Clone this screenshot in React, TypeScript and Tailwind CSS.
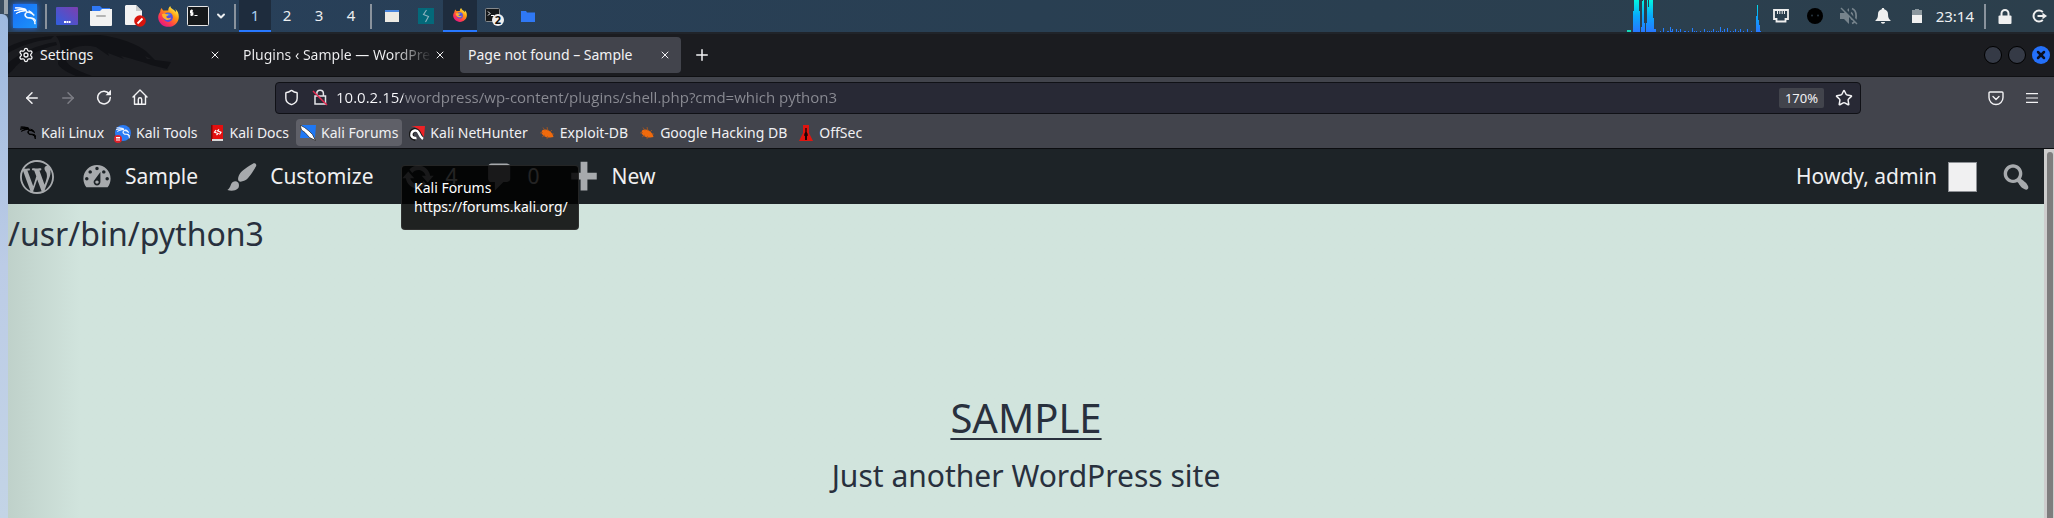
import React from "react";
import { SiKalilinux } from "react-icons/si";
import { ArrowLeft, ArrowRight, ChevronDown, Plus, X, Shield, Star, Menu, Settings } from "lucide-react";

function Dashicon({ d, className }: { d: string; className: string }) {
  return (
    <svg viewBox="0 0 20 20" className={className} fill="currentColor" aria-hidden="true">
      <path d={d} />
    </svg>
  );
}

const DASH = {
  wordpress:
    "M20 10c0-5.51-4.49-10-10-10S0 4.49 0 10s4.48 10 10 10 10-4.49 10-10zM7.78 15.37L4.37 6.22c.55-.02 1.17-.08 1.17-.08.5-.06.44-1.13-.06-1.11 0 0-1.45.11-2.37.11-.18 0-.37 0-.58-.01C4.12 2.69 6.87 1.11 10 1.11c2.33 0 4.45.87 6.05 2.34-.68-.11-1.65.39-1.65 1.58 0 .74.45 1.36.9 2.1.35.61.55 1.36.55 2.46 0 1.49-1.4 5-1.4 5l-3.03-8.37c.54-.02.82-.17.82-.17.5-.05.44-1.25-.06-1.22 0 0-1.44.12-2.38.12-.87 0-2.33-.12-2.33-.12-.5-.03-.56 1.2-.06 1.22l.92.08 1.26 3.41zM17.41 10c.24-.64.74-1.87.43-4.25.7 1.29 1.05 2.71 1.05 4.25 0 3.29-1.73 6.24-4.4 7.78.97-2.59 1.94-5.2 2.92-7.78zM6.1 18.09C3.12 16.65 1.11 13.53 1.11 10c0-1.3.23-2.48.72-3.59C3.25 10.3 4.67 14.2 6.1 18.09zm4.03-6.63l2.58 6.98c-.86.29-1.76.45-2.71.45-.79 0-1.57-.11-2.29-.33.81-2.38 1.62-4.74 2.42-7.1z",
  dashboard:
    "M3.76 16h12.48c1.1-1.37 1.76-3.11 1.76-5 0-4.42-3.58-8-8-8s-8 3.58-8 8c0 1.89.66 3.63 1.76 5zM10 4c.55 0 1 .45 1 1s-.45 1-1 1-1-.45-1-1 .45-1 1-1zM6 6c.55 0 1 .45 1 1s-.45 1-1 1-1-.45-1-1 .45-1 1-1zm8 0c.55 0 1 .45 1 1s-.45 1-1 1-1-.45-1-1 .45-1 1-1zm-5.37 5.55L12 7v6c0 1.1-.9 2-2 2s-2-.9-2-2c0-.57.24-1.08.63-1.45zM4 10c.55 0 1 .45 1 1s-.45 1-1 1-1-.45-1-1 .45-1 1-1zm12 0c.55 0 1 .45 1 1s-.45 1-1 1-1-.45-1-1 .45-1 1-1zm-5 3c0-.55-.45-1-1-1s-1 .45-1 1 .45 1 1 1 1-.45 1-1z",
  brush:
    "M18.33 3.57s.27-.8-.31-1.36c-.53-.52-1.22-.24-1.22-.24-.61.3-5.76 3.47-7.67 5.57-.86.96-2.06 3.79-1.09 4.82.92.98 3.96-.17 4.79-1 2.06-2.06 5.21-7.17 5.5-7.79zM1.4 17.65c2.37-1.56 1.46-3.41 3.23-4.64.93-.65 2.22-.62 3.08.29.63.67.8 2.57-.16 3.46-1.57 1.45-4 1.55-6.15.89z",
  update:
    "M10.2 3.28c3.53 0 6.43 2.61 6.92 6h2.08l-3.5 4-3.5-4h2.32c-.45-1.97-2.21-3.45-4.32-3.45-1.45 0-2.73.71-3.54 1.78L4.95 5.66C6.23 4.2 8.11 3.28 10.2 3.28zm-.4 13.44c-3.52 0-6.43-2.61-6.92-6H.8l3.5-4c1.17 1.33 2.33 2.67 3.5 4H5.48c.45 1.97 2.21 3.45 4.32 3.45 1.45 0 2.73-.71 3.54-1.78l1.71 1.95c-1.28 1.46-3.15 2.38-5.25 2.38z",
  comment: "M5 2h9c1.1 0 2 .9 2 2v7c0 1.1-.9 2-2 2h-2l-5 5v-5H5c-1.1 0-2-.9-2-2V4c0-1.1.9-2 2-2z",
  plus: "M8 1h4v6.500h5.500v4h-5.500v6.500h-4v-6.500h-5.500v-4h5.500z",
  search:
    "M12.14 4.18c1.87 1.87 2.11 4.75.72 6.89.12.1.22.21.36.31.2.16.47.36.81.59.34.24.56.39.66.47.42.31.73.57.94.78.32.32.6.65.84 1 .25.35.44.69.59 1.04.14.35.21.68.18 1-.02.32-.14.59-.36.81s-.49.34-.81.36c-.31.02-.65-.04-.99-.19-.35-.14-.7-.34-1.04-.59-.35-.24-.68-.52-1-.84-.21-.21-.47-.52-.77-.93-.1-.13-.25-.35-.47-.66-.22-.32-.4-.57-.56-.78-.16-.2-.29-.35-.44-.5-2.07 1.09-4.69.76-6.44-.98-2.14-2.15-2.14-5.64 0-7.78 2.15-2.15 5.63-2.15 7.78 0zm-1.41 6.36c1.36-1.37 1.36-3.58 0-4.95-1.37-1.37-3.59-1.37-4.95 0-1.37 1.37-1.37 3.58 0 4.95 1.36 1.37 3.58 1.37 4.95 0z",
};

function FirefoxLogo({ className, id }: { className: string; id: string }) {
  return (
    <svg viewBox="0 0 24 24" className={className} aria-hidden="true">
      <defs>
        <linearGradient id={id + "-body"} x1="0.85" y1="0.1" x2="0.2" y2="0.95">
          <stop offset="0" stopColor="#fff44f" />
          <stop offset="0.35" stopColor="#ff980e" />
          <stop offset="0.7" stopColor="#ff3f4a" />
          <stop offset="1" stopColor="#e31587" />
        </linearGradient>
      </defs>
      <path fill={`url(#${id}-body)`} d="M14 0c-2 2-2.400 3.600-2.200 5C8.500 5 7.500 5.600 6 5 4.900 4.400 4.600 3.400 4.500 2.400 3 3.600 2.500 5.200 2.500 6.800 1 8.700.2 10.800.2 13 .5 19.200 5.500 23.800 12 23.800c6.600 0 11.800-4.800 11.800-11.600 0-4-1.800-6.800-4-8.700.7 1.400.9 2.500.8 3.600C18.800 4 14.500 3.500 14 0z" />
      <circle cx="11.600" cy="12.800" r="5.400" fill="#5a4fe0" />
      <path fill="#3a8ef0" d="M7 10.500c2-2.600 6.500-2.600 8.500 0-2.400-.5-3 .8-4.400 1.200-1.400.3-3 0-4.100-1.200z" />
      <path fill="#ffb02e" d="M4.500 9.500c2-1.500 4-1 5.200-.2 1 .1 2 .1 2.500.5-.5 1.300-2.400 1.400-2.700 2.500 0 1 1 1.700 2.400 1.600 1.200-.1 2-.9 3.100-.4-.8 1.900-3 3-5.200 2.400C6.500 15.100 4.600 12.500 4.500 9.500z" />
    </svg>
  );
}

function DisplayIcon() {
  return (
    <svg viewBox="0 0 22 18" className="h-[18px] w-[22px]" aria-hidden="true">
      <defs>
        <linearGradient id="desk" x1="0" y1="1" x2="1" y2="0">
          <stop offset="0" stopColor="#2f5fe0" />
          <stop offset="1" stopColor="#7d3fae" />
        </linearGradient>
      </defs>
      <rect width="22" height="18" rx="1" fill="url(#desk)" />
      <path fill="#fff" d="M8 14h2v2H8zM10.500 14h2v2h-2zM13 14h1.500v2H13z" />
    </svg>
  );
}

function FilesIcon() {
  return (
    <svg viewBox="0 0 22 20" className="h-5 w-[22px]" aria-hidden="true">
      <path fill="#2f78f4" d="M2 0h8l2 2h8v6H2z" />
      <path fill="#f2f2f2" d="M0 5h10l2-2h10v16a1 1 0 0 1-1 1H1a1 1 0 0 1-1-1z" />
      <rect x="6" y="9" width="10" height="2" rx="1" fill="#b4b4b4" />
    </svg>
  );
}

function EditorIcon() {
  return (
    <svg viewBox="0 0 22 22" className="h-[22px] w-[22px]" aria-hidden="true">
      <path fill="#f3f3f3" d="M2 0h10l6 6v14H2a1 1 0 0 1-1-1V1z" />
      <path fill="#c9c9c9" d="M12 0l6 6h-6z" />
      <circle cx="16" cy="16" r="5.800" fill="#d8140c" />
      <path stroke="#fff" strokeWidth="1.800" d="M13.500 18.500l5-5" />
    </svg>
  );
}

function TerminalIcon() {
  return (
    <svg viewBox="0 0 22 20" className="h-5 w-[22px]" aria-hidden="true">
      <rect x=".5" y=".5" width="21" height="19" rx="1" fill="#15181a" stroke="#e6e6e6" />
      <path fill="none" stroke="#fff" strokeWidth="1.200" d="M6 4.800H3.600v2H5.800v2H3.200M4.700 3.500v6.500M7.500 9.500h3" />
    </svg>
  );
}

const BARS = [
  [6, 21], [7, 32], [8, 32], [9, 32], [10, 32], [11, 32], [12, 21], [14, 5], [15, 31], [16, 32], [17, 9], [19, 9],
  [20, 32], [21, 25], [22, 32], [23, 32], [24, 32], [25, 32], [26, 14], [27, 3], [28, 3], [33, 1], [36, 4], [40, 1], [41, 1],
  [43, 5], [44, 1], [45, 3], [49, 3], [51, 1], [53, 3], [57, 1], [58, 1], [61, 1], [65, 4], [67, 1], [69, 1], [73, 1], [77, 3],
  [80, 1], [82, 1], [84, 1], [86, 3], [89, 1], [91, 1], [93, 5], [95, 1], [97, 3], [100, 4], [103, 1], [106, 1], [108, 3],
  [111, 1], [113, 3], [116, 1], [120, 3], [124, 1], [129, 16], [130, 27], [131, 12], [132, 7], [133, 1],
];

function CpuGraph() {
  return (
    <svg viewBox="0 0 134 32" className="h-8 w-[134px]" aria-label="CPU graph" role="img" shapeRendering="crispEdges">
      <defs>
        <linearGradient id="cpu" gradientUnits="userSpaceOnUse" x1="0" y1="0" x2="0" y2="32">
          <stop offset="0" stopColor="#00f5e0" />
          <stop offset="0.5" stopColor="#0aa8fb" />
          <stop offset="1" stopColor="#2777ff" />
        </linearGradient>
      </defs>
      <rect x="0" y="30" width="4" height="2" fill="#16d9b8" />
      {BARS.map(([x, h]) => (
        <rect key={x} x={x} y={32 - h} width="1" height={h} fill="url(#cpu)" />
      ))}
    </svg>
  );
}

function Separator() {
  return <span className="h-[25px] w-0.5 bg-[#8a939d]" />;
}

function TaskButton({ label, active, children }: { label: string; active?: boolean; children: React.ReactNode }) {
  return (
    <button
      aria-label={label}
      className={
        active
          ? "flex h-8 w-[34px] items-center justify-center border-b-2 border-[#2777ff] bg-[#1e2c3d]"
          : "flex h-8 w-[34px] items-center justify-center"
      }
    >
      {children}
    </button>
  );
}

function SystemPanel() {
  return (
    <header className="flex h-8 items-center bg-linear-to-r from-[#28405b] via-[#293f52] to-[#2c3f4c] text-[#eceff1]">
      <button
        aria-label="Applications"
        className="ml-[5px] flex h-6 w-6 items-center justify-center bg-linear-to-br from-[#1b6cf5] to-[#1d93fb] shadow-[0_0_5px_#2777ff]"
      >
        <SiKalilinux className="h-[22px] w-[22px] text-white" stroke="currentColor" strokeWidth={1} />
      </button>
      <div className="ml-2 flex items-center">
        <Separator />
        <div className="ml-[9px] mr-[7px] flex items-center gap-3">
          <button aria-label="Show desktop"><DisplayIcon /></button>
          <button aria-label="Files"><FilesIcon /></button>
          <button aria-label="Text editor"><EditorIcon /></button>
          <button aria-label="Firefox"><FirefoxLogo id="launch" className="h-[21px] w-[21px]" /></button>
          <div className="-ml-1 flex items-center gap-1.5">
            <button aria-label="Terminal"><TerminalIcon /></button>
            <button aria-label="More terminals"><ChevronDown className="h-3 w-3" strokeWidth={4} /></button>
          </div>
        </div>
        <Separator />
      </div>
      <nav aria-label="Workspaces" className="ml-[3px] mr-[3px] flex text-[15px] leading-[30px]">
        <button className="h-8 w-8 border-b-2 border-[#2777ff] bg-[#1e2c3d] text-[#a9d1ee]">1</button>
        <button className="h-8 w-8 border-b-2 border-transparent">2</button>
        <button className="h-8 w-8 border-b-2 border-transparent">3</button>
        <button className="h-8 w-8 border-b-2 border-transparent">4</button>
      </nav>
      <Separator />
      <div className="ml-[3px] flex">
        <TaskButton label="Window">
          <svg viewBox="0 0 14 12" className="h-3 w-3.5"><rect width="14" height="12" fill="#edebe4" /><rect width="14" height="2" fill="#4a86dd" /></svg>
        </TaskButton>
        <TaskButton label="Burp">
          <svg viewBox="0 0 16 16" className="h-4 w-4"><rect width="16" height="16" fill="#04697a" /><path fill="none" stroke="#8fb3bf" strokeWidth="1.100" d="M8.500 2L5.500 6.500 10.500 8.500 7.500 14" /></svg>
        </TaskButton>
        <TaskButton label="Firefox window" active>
          <FirefoxLogo id="task" className="h-3.5 w-3.5" />
        </TaskButton>
        <TaskButton label="Terminal windows">
          <svg viewBox="0 0 20 20" className="h-5 w-5">
            <rect x="1.500" y="2.500" width="14" height="13" rx="1" fill="#15181a" stroke="#85898c" />
            <path fill="none" stroke="#fff" d="M4 5.500l2 2-2 2M7 9.500h3" />
            <circle cx="14" cy="14" r="6" fill="#efefef" />
            <text x="14" y="18" textAnchor="middle" fontSize="11" fontWeight="700" fill="#111">2</text>
          </svg>
        </TaskButton>
        <TaskButton label="Folder">
          <svg viewBox="0 0 14 11" className="h-[11px] w-3.5"><path fill="#2f78f4" d="M0 0h5l1 1.500h8V11H0z" /></svg>
        </TaskButton>
      </div>

      <div className="ml-auto flex items-center">
        <CpuGraph />
        <div className="ml-[3px] flex">
          <TaskButton label="Network">
            <svg viewBox="0 0 16 14" className="h-3.5 w-4"><path fill="none" stroke="#eee" strokeWidth="1.800" d="M1 1h14v9h-2.500v2.500h-9V10H1z" /><path stroke="#eee" d="M4.500 2v3M6.800 2v3M9.200 2v3M11.500 2v3" /></svg>
          </TaskButton>
          <TaskButton label="Status">
            <svg viewBox="0 0 16 16" className="h-4 w-4"><circle cx="8" cy="8" r="8" fill="#000" /><circle cx="5" cy="7.500" r="1" fill="#26343f" /><circle cx="11" cy="7.500" r="1" fill="#26343f" /></svg>
          </TaskButton>
          <TaskButton label="Muted">
            <svg viewBox="0 0 18 18" className="h-[18px] w-[18px]"><path fill="#76838c" d="M0 6h4l5-5v16l-5-5H0z" /><path fill="none" stroke="#76838c" strokeWidth="1.800" d="M11 5.500c2 1.500 2 5.500 0 7M12 1.500c5.500 2 5.500 13 0 15" /><path stroke="#2b3f4d" strokeWidth="3" d="M2 0l16 16" /><path stroke="#76838c" strokeWidth="1.500" d="M1 1l16 16" /></svg>
          </TaskButton>
          <TaskButton label="Notifications">
            <svg viewBox="0 0 16 16" className="h-4 w-4"><path fill="#f0f0f0" d="M8 0c1 0 1.200.6 1.200 1.200C11.600 1.800 13 3.600 13 6c0 3.500.8 5 2.500 6.200V13H.5v-.8C2.200 11 3 9.500 3 6c0-2.400 1.400-4.200 3.800-4.800C6.800.6 7 0 8 0zM6 14h4c0 1-.8 1.700-2 1.700S6 15 6 14z" /></svg>
          </TaskButton>
          <TaskButton label="Battery">
            <svg viewBox="0 0 10 14" className="h-3.5 w-2.5"><path fill="#8b979e" d="M3 0h4v1h3v5H0V1h3z" /><path fill="#f0f0f0" d="M0 6h10v8H0z" /></svg>
          </TaskButton>
        </div>
        <time className="ml-0.5 mr-2.5 text-[15px] leading-8">23:14</time>
        <Separator />
        <div className="ml-1 flex gap-5 pr-[7px] pl-2">
          <button aria-label="Lock screen" className="flex h-8 items-center">
            <svg viewBox="0 0 14 15" className="h-[15px] w-3.5"><path fill="none" stroke="#f0f0f0" strokeWidth="2" d="M3.500 7V4.500a3.500 3.500 0 0 1 7 0V7" /><rect x=".5" y="6.500" width="13" height="8.500" rx="1" fill="#f0f0f0" /></svg>
          </button>
          <button aria-label="Log out" className="flex h-8 items-center">
            <svg viewBox="0 0 15 14" className="h-3.5 w-[15px]"><path fill="none" stroke="#f0f0f0" strokeWidth="2" d="M10.800 3A5.500 5.500 0 1 0 10.800 11M5.500 7H11" /><path fill="#f0f0f0" d="M10.500 3.800L15 7l-4.500 3.200z" /></svg>
          </button>
        </div>
      </div>
    </header>
  );
}

function TabBar() {
  return (
    <div className="relative flex h-[45px] items-center gap-1 border-b border-t-2 border-b-[#0f1013] border-t-[#20242a] bg-[#1b1c20] pl-0.5 text-sm text-[#f2f2f4]">
      <svg viewBox="0 0 164 42" className="absolute left-0 top-0 h-[42px] w-[164px]" aria-hidden="true">
        <path fill="#111216" d="M0 13C14 6 28 3 46 2L43 5C26 7 12 12 0 19zM0 29C12 19 28 11 48 8L49 11C30 15 14 24 4 37L0 40zM48 2L92 1C110 3 130 10 139 18L147 26 163 28 159 35 143 31C132 27 124 25 113 22L116 25 100 19 101 22 88 13C76 10 64 12 58 20C54 30 68 36 84 42H68C58 38 52 34 50 30C51 20 56 12 48 2z" />
        <path fill="#1b1c20" d="M137 22l6 3-4 0z" />
      </svg>
      <div className="relative flex h-9 w-[221px] items-center rounded pl-2 pr-2">
        <Settings className="h-4 w-4" strokeWidth={2} />
        <span className="ml-1.5 flex-1">Settings</span>
        <button aria-label="Close Settings"><X className="h-4 w-4 p-0.5" strokeWidth={2} /></button>
      </div>
      <div className="flex h-9 w-[221px] items-center rounded pl-2 pr-2">
        <span className="w-0 flex-1 overflow-hidden whitespace-nowrap bg-linear-to-r from-[#f2f2f4] from-80% to-transparent bg-clip-text text-transparent">
          Plugins ‹ Sample — WordPress
        </span>
        <button aria-label="Close Plugins"><X className="h-4 w-4 p-0.5" strokeWidth={2} /></button>
      </div>
      <div className="flex h-9 w-[221px] items-center rounded bg-[#42444c] pl-2 pr-2">
        <span className="flex-1">Page not found – Sample</span>
        <button aria-label="Close page"><X className="h-4 w-4 p-0.5" strokeWidth={2} /></button>
      </div>
      <button aria-label="New tab" className="ml-2"><Plus className="h-[18px] w-[18px]" strokeWidth={2} /></button>
      <div className="ml-auto mr-1 flex gap-1.5">
        <button aria-label="Minimize" className="h-[18px] w-[18px] rounded-full border border-black bg-[#353a46]" />
        <button aria-label="Maximize" className="h-[18px] w-[18px] rounded-full border border-black bg-[#353a46]" />
        <button aria-label="Close window" className="flex h-[18px] w-[18px] items-center justify-center rounded-full bg-[#2470fa] text-[#0b1020]">
          <X className="h-3 w-3" strokeWidth={5} />
        </button>
      </div>
    </div>
  );
}

function NavBar() {
  return (
    <div className="flex h-[41px] items-center bg-[#42444c] pl-1.5 pr-1 text-[#f2f2f4]">
      <div className="flex">
        <button aria-label="Back" className="flex w-9 justify-center"><ArrowLeft className="h-[18px] w-[18px]" strokeWidth={2} /></button>
        <button aria-label="Forward" className="flex w-9 justify-center text-[#7d7e85]"><ArrowRight className="h-[18px] w-[18px]" strokeWidth={2} /></button>
        <button aria-label="Reload" className="flex w-9 justify-center">
          <svg viewBox="0 0 16 16" className="h-4 w-4"><path fill="none" stroke="currentColor" strokeWidth="1.500" strokeLinecap="round" d="M13.200 5A6.300 6.300 0 1 0 14.300 8.500" /><path fill="currentColor" d="M15 .8v5.400H9.600z" /></svg>
        </button>
        <button aria-label="Home" className="flex w-9 justify-center">
          <svg viewBox="0 0 16 16" className="h-4 w-4"><path fill="none" stroke="currentColor" strokeWidth="1.400" strokeLinecap="round" strokeLinejoin="round" d="M1 8l7-7 7 7M2.500 7v8.300h11V7M6.300 15v-4.500a1.700 1.700 0 0 1 3.400 0V15" /></svg>
        </button>
      </div>
      <div className="mx-[117px] flex h-8 flex-1 items-center rounded border border-[#101116] bg-[#282935] pl-[7px] pr-[7px]">
        <Shield className="h-[17px] w-[17px]" strokeWidth={2} />
        <svg viewBox="0 0 16 17" className="ml-3 h-[17px] w-4" aria-hidden="true"><path fill="none" stroke="#e4e4e8" strokeWidth="1.500" d="M4.800 7V4.500a3.300 3.300 0 0 1 6.600 0V7M3 7h10.500v8H3z" /><path stroke="#e22850" strokeWidth="1.500" d="M1 2l14 14" /></svg>
        <input
          aria-label="Address"
          readOnly
          value="10.0.2.15/wordpress/wp-content/plugins/shell.php?cmd=which python3"
          className="ml-2 h-7 min-w-0 flex-1 bg-linear-to-r from-[#fbfbfe] from-[67px] to-[#8b8c94] to-[67px] bg-clip-text pb-0.5 font-['Open_Sans',sans-serif] text-[15px] text-transparent outline-none"
        />
        <button className="h-5 w-[45px] rounded-xs bg-[#42444c] text-[13px] leading-5">170%</button>
        <button aria-label="Bookmark" className="ml-[11px]"><Star className="h-[18px] w-[18px]" strokeWidth={2} /></button>
      </div>
      <button aria-label="Pocket" className="flex w-9 justify-center">
        <svg viewBox="0 0 16 16" className="h-4 w-4"><path fill="none" stroke="currentColor" strokeWidth="1.400" strokeLinecap="round" strokeLinejoin="round" d="M2 2h12a1 1 0 0 1 1 1v4.500a7 7 0 0 1-14 0V3a1 1 0 0 1 1-1zM5 6.500l3 3 3-3" /></svg>
      </button>
      <button aria-label="Menu" className="flex w-9 justify-center">
        <svg viewBox="0 0 12 10" className="h-2.5 w-3"><path stroke="currentColor" strokeWidth="1.200" d="M0 .6h12M0 5h12M0 9.400h12" /></svg>
      </button>
    </div>
  );
}

function BugIcon() {
  return (
    <svg viewBox="0 0 16 16" className="h-4 w-4" aria-hidden="true">
      <path fill="#f06a0c" d="M3 5.500C6 3 11 5 13.500 9l1 3-3 .5C7 13 3.500 10.500 2.500 8z" />
      <path fill="none" stroke="#b0571a" strokeWidth=".8" d="M1 8l3-.5M4 2.500l2 3M8 2l1 4M3 12l3-2M8 14l.5-3M13 5l-2 2M15 9h-2" />
    </svg>
  );
}

function Bookmark({ icon, label, href, active }: { icon: React.ReactNode; label: string; href: string; active?: boolean }) {
  return (
    <a
      href={href}
      className={
        active
          ? "flex h-[27px] items-center gap-[5px] rounded bg-[#5f6068] px-1"
          : "flex h-[27px] items-center gap-[5px] rounded px-1"
      }
    >
      {icon}
      {label}
    </a>
  );
}

function BookmarksBar() {
  return (
    <nav aria-label="Bookmarks" className="flex h-[31px] items-start gap-[3px] border-b border-[#0c0d10] bg-[#42444c] pl-2 pt-px text-sm text-[#f0f0f3]">
      <Bookmark href="#linux" label="Kali Linux" icon={<SiKalilinux className="h-4 w-4 text-black" stroke="currentColor" strokeWidth={1.5} />} />
      <Bookmark
        href="#tools"
        label="Kali Tools"
        icon={
          <span className="relative flex h-4 w-4 items-center justify-center rounded-full bg-[#2a7bf5]">
            <SiKalilinux className="h-3.5 w-3.5 text-white" stroke="currentColor" strokeWidth={1} />
            <svg viewBox="0 0 8 8" className="absolute -bottom-0.5 -left-px h-2 w-2"><circle cx="4" cy="4" r="4" fill="#e0202a" /><path stroke="#fff" d="M2 2.500h4M3 2.500V6M5 2.500V6" /></svg>
          </span>
        }
      />
      <Bookmark
        href="#docs"
        label="Kali Docs"
        icon={<svg viewBox="0 0 16 16" className="h-4 w-4"><path fill="#7a0808" d="M2 0h2v16H2z" /><path fill="#e30f0f" d="M3.500 0H14v14H3.500z" /><path fill="#d9d9d9" d="M3 14h11v2H3z" /><path fill="none" stroke="#fff" strokeWidth="1.200" d="M7 5L5.500 7.200 9 8.500 7.500 10M10 4.300L8.500 5.800 12 7.200 10.500 9.500" /></svg>}
      />
      <Bookmark
        active
        href="#forums"
        label="Kali Forums"
        icon={<svg viewBox="0 0 16 16" className="h-4 w-4"><path fill="#1f78f5" d="M2 0h14l-1 13H0z" /><path fill="#fff" stroke="#222" strokeWidth=".7" d="M0 0l4.500 2.500 4.500 3.500 3.500 3.500 3 6-6-3-4.500-5L1.500 5z" /></svg>}
      />
      <Bookmark
        href="#nethunter"
        label="Kali NetHunter"
        icon={<svg viewBox="0 0 16 16" className="h-4 w-4"><path fill="#ee2226" d="M2 1h14l-1 11L6 2z" /><path fill="#161616" d="M0 9c0-4 3-6 6-6 5 0 6 5 9 11-4-2-5-6-8-7-2 0-3 2-2 4l3 1-2 4C2 15 0 13 0 9z" /><path fill="none" stroke="#fff" strokeWidth="2.400" d="M7.500 13C3.500 13.500 1.800 11 2.500 8.500 3.500 5 8 4.500 9.500 7.500c1 2.200 2 4.500 4.500 6.500" /></svg>}
      />
      <Bookmark href="#exploit" label="Exploit-DB" icon={<BugIcon />} />
      <Bookmark href="#ghdb" label="Google Hacking DB" icon={<BugIcon />} />
      <Bookmark
        href="#offsec"
        label="OffSec"
        icon={<svg viewBox="0 0 16 16" className="h-4 w-4"><path fill="#e0140f" d="M5 0h6v8l4 8H1l4-8z" /><path fill="#1a0505" d="M7.300 3h1.400v4l1 2v2H9v4H7v-4h-.7V9l1-2z" /></svg>}
      />
    </nav>
  );
}

function AdminBar() {
  return (
    <div className="relative flex h-[55px] items-center bg-[#1d2327] pl-3 text-[21px] text-[#f0f0f1]">
      <a href="#wp" aria-label="WordPress"><Dashicon d={DASH.wordpress} className="h-[34px] w-[34px] text-[#a7aaad]" /></a>
      <a href="#sample" className="ml-[26px] flex items-center gap-[11px]">
        <Dashicon d={DASH.dashboard} className="h-[34px] w-[34px] text-[#a7aaad]" />Sample
      </a>
      <a href="#customize" className="ml-[27px] flex items-center gap-[11px]">
        <Dashicon d={DASH.brush} className="h-[34px] w-[34px] text-[#a7aaad]" />Customize
      </a>
      <a href="#updates" className="ml-[27px] flex items-center gap-[11px]">
        <Dashicon d={DASH.update} className="h-[34px] w-[34px] text-[#a7aaad]" />4
      </a>
      <a href="#comments" className="ml-[25px] flex items-center gap-[11px]">
        <Dashicon d={DASH.comment} className="h-[34px] w-[34px] text-[#a7aaad]" />0
      </a>
      <a href="#new" className="ml-[27px] flex items-center gap-[11px]">
        <Dashicon d={DASH.plus} className="h-[34px] w-[34px] text-[#a7aaad]" />New
      </a>
      <a href="#profile" className="ml-auto flex items-center gap-[11px]">
        Howdy, admin
        <span className="h-[30px] w-[29px] border border-[#8c8f94] bg-[#f0f0f1]" />
      </a>
      <button aria-label="Search" className="ml-[22px] mr-[11px]"><Dashicon d={DASH.search} className="h-[34px] w-[34px] text-[#a7aaad]" /></button>
      <div role="tooltip" className="absolute left-[393px] top-4 z-10 h-[65px] w-[178px] rounded border border-[#3a3a3a]/60 bg-black/85 px-3 pt-3 text-sm leading-[19px] text-white">
        <p>Kali Forums</p>
        <p>https://forums.kali.org/</p>
      </div>
    </div>
  );
}

export default function App() {
  return (
    <div className="flex min-h-screen bg-[#d1e4dd] font-['Noto_Sans',sans-serif]">
      <div className="flex w-2 shrink-0 flex-col bg-[#3a4c5e]">
        <div className="h-3.5 border-r-4 border-[#9aa3aa]" />
        <div className="flex-1 rounded-tr-md bg-linear-to-b from-[#9db9df] via-[#bccce6] to-[#c3d4e6]" />
      </div>
      <div className="flex min-w-0 flex-1 flex-col">
        <SystemPanel />
        <TabBar />
        <NavBar />
        <BookmarksBar />
        <div className="flex flex-1">
          <div className="flex min-w-0 flex-1 flex-col">
            <AdminBar />
            <main className="flex-1 bg-linear-to-r from-[#bfd1ca] to-[#d1e4dd] to-[72px] text-[#28303d]">
              <p className="pt-1.5 text-[32px] leading-[48px]">/usr/bin/python3</p>
              <div className="pt-[136px] text-center">
                <h1 className="text-[40px] leading-[48px]">
                  <a href="#home" className="underline decoration-2 underline-offset-[5px]">SAMPLE</a>
                </h1>
                <p className="mt-3.5 text-[30px] leading-10">Just another WordPress site</p>
              </div>
            </main>
          </div>
          <div className="w-2.5 bg-[#cdcdcd] pl-[3px] pr-px pt-[3px]">
            <div className="h-full rounded-t-full bg-[#7d7d7d]" />
          </div>
        </div>
      </div>
    </div>
  );
}
